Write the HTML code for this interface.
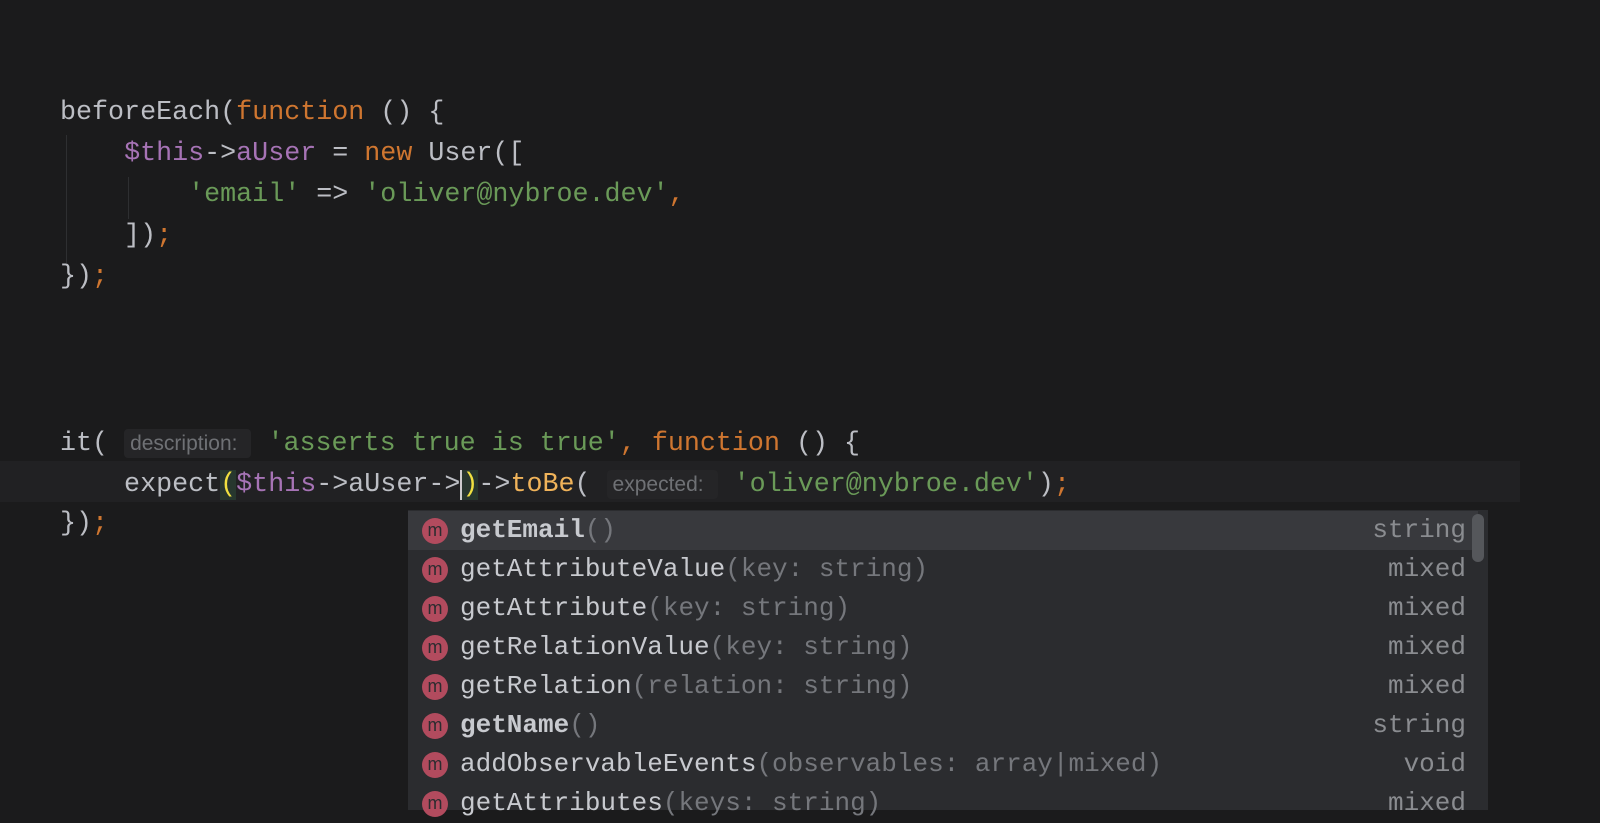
<!DOCTYPE html>
<html><head><style>
body{margin:0;width:1600px;height:800px;background:#1b1b1c;overflow:hidden;position:relative;font-family:"Liberation Mono",monospace;font-size:26.7px;color:#bcbec4}
.l{position:absolute;left:60px;white-space:pre;height:41px;line-height:41px}
.o{color:#cf7630}.p{color:#a673b5}.g{color:#6a9a58}.y{color:#f0b35a}
.h{font-family:"Liberation Sans",sans-serif;font-size:21px;color:#6f7175;background:#252527;padding:3px 14px 3px 6px;border-radius:4px}
.guide{position:absolute;width:1px;background:#2e2f31}
#pop{position:absolute;left:408px;top:510px;width:1080px;height:300px;background:#2b2c2f}
.r{position:absolute;left:0;width:1070px;height:39px;line-height:39px;white-space:pre;font-size:26px}
.r .ic{position:absolute;left:14px;top:7px;width:26px;height:26px;border-radius:50%;background:#b24b5e;color:#2b2c2f;font-family:"Liberation Sans",sans-serif;font-size:18px;line-height:24px;text-align:center}
.r .n{position:absolute;left:52px;color:#c8cacf}
.r .n b{font-weight:bold}
.r .a{color:#75777c}
.r .t{position:absolute;right:12px;color:#8a8c90}
</style></head><body>
<div class="guide" style="left:66px;top:135px;height:128px"></div>
<div class="guide" style="left:128px;top:177px;height:42px"></div>
<div style="position:absolute;left:0;top:461px;width:1520px;height:41px;background:#212123"></div>
<div class="l" style="top:93px">beforeEach(<span class="o">function</span> () {</div>
<div class="l" style="top:134px">    <span class="p">$this</span>-><span class="p">aUser</span> = <span class="o">new</span> User([</div>
<div class="l" style="top:175px">        <span class="g">'email'</span> => <span class="g">'oliver@nybroe.dev'</span><span class="o">,</span></div>
<div class="l" style="top:216px">    ])<span class="o">;</span></div>
<div class="l" style="top:257px">})<span class="o">;</span></div>
<div class="l" style="top:423px">it( <span class="h">description:</span> <span class="g">'asserts true is true'</span><span class="o">,</span> <span class="o">function</span> () {</div>
<div class="l" style="top:464px">    expect<span style="color:#f0e040;background:#27372e">(</span><span class="p">$this</span>->aUser-><span style="border-left:2px solid #ccc;color:#f0e040;background:#27372e">)</span>-><span class="y">toBe</span>( <span class="h">expected:</span> <span class="g">'oliver@nybroe.dev'</span>)<span class="o">;</span></div>
<div class="l" style="top:504px">})<span class="o">;</span></div>
<div id="pop">
<div style="position:absolute;left:0;top:1px;width:1070px;height:39px;background:#38393d"></div>
<div style="position:absolute;left:1064px;top:4px;width:12px;height:48px;border-radius:6px;background:#55575b"></div>
<div class="r" style="top:1px"><span class="ic">m</span><span class="n"><b>getEmail</b><span class="a">()</span></span><span class="t">string</span></div>
<div class="r" style="top:40px"><span class="ic">m</span><span class="n">getAttributeValue<span class="a">(key: string)</span></span><span class="t">mixed</span></div>
<div class="r" style="top:79px"><span class="ic">m</span><span class="n">getAttribute<span class="a">(key: string)</span></span><span class="t">mixed</span></div>
<div class="r" style="top:118px"><span class="ic">m</span><span class="n">getRelationValue<span class="a">(key: string)</span></span><span class="t">mixed</span></div>
<div class="r" style="top:157px"><span class="ic">m</span><span class="n">getRelation<span class="a">(relation: string)</span></span><span class="t">mixed</span></div>
<div class="r" style="top:196px"><span class="ic">m</span><span class="n"><b>getName</b><span class="a">()</span></span><span class="t">string</span></div>
<div class="r" style="top:235px"><span class="ic">m</span><span class="n">addObservableEvents<span class="a">(observables: array|mixed)</span></span><span class="t">void</span></div>
<div class="r" style="top:274px"><span class="ic">m</span><span class="n">getAttributes<span class="a">(keys: string)</span></span><span class="t">mixed</span></div>
</div>
</body></html>
